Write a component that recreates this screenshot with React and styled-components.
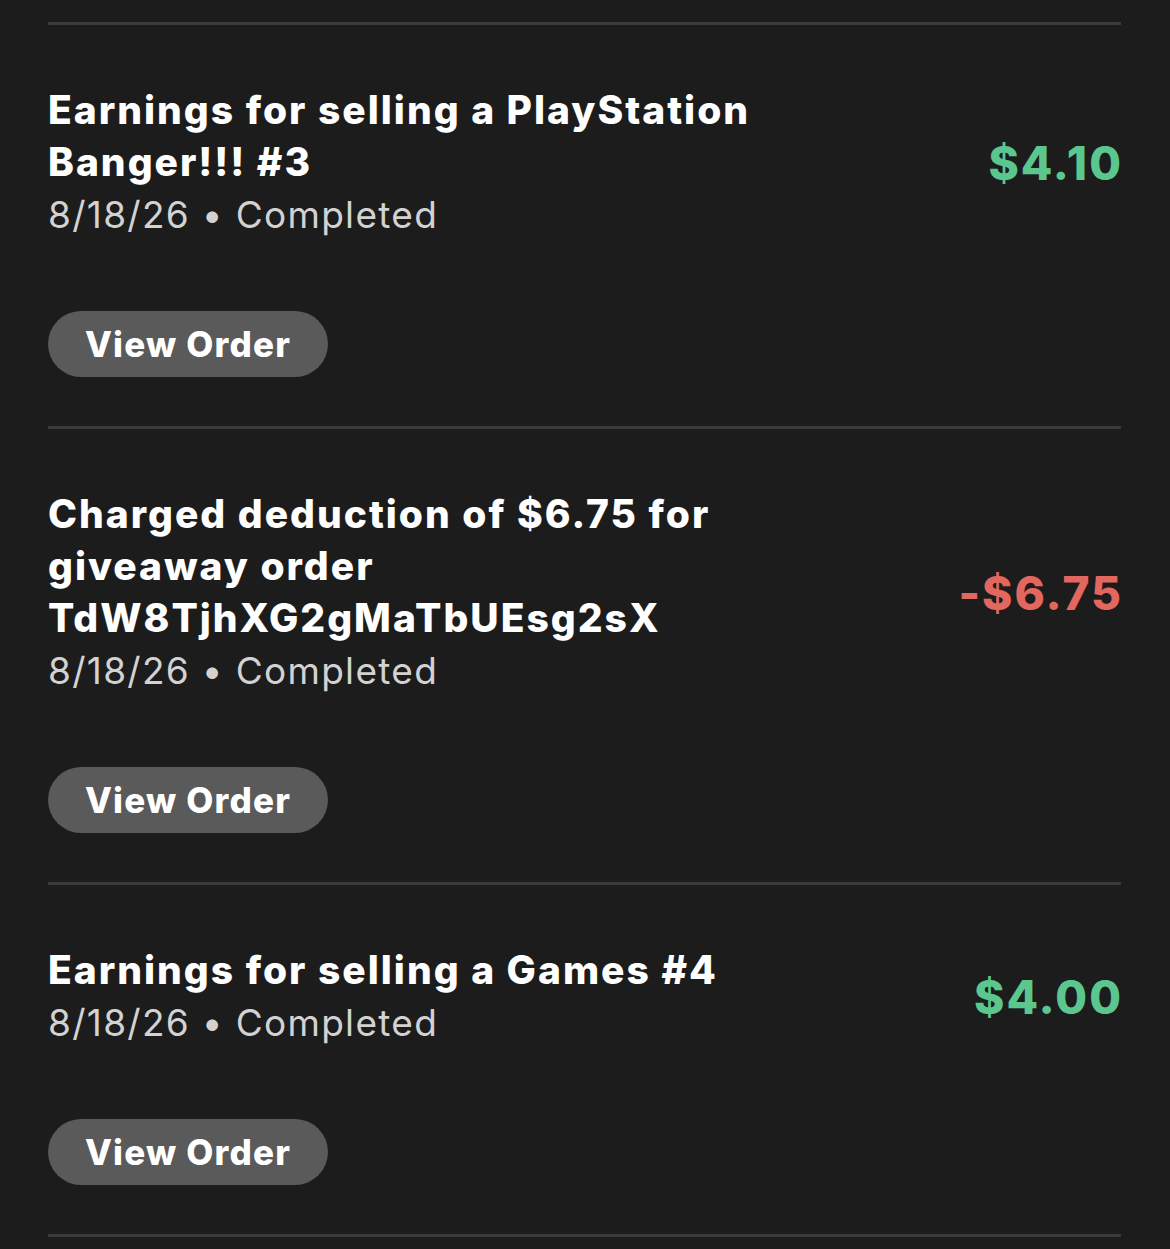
import React from 'react';
import styled, { createGlobalStyle } from 'styled-components';

const GlobalStyle = createGlobalStyle`
    html, body {
        margin: 0;
        padding: 0;
        background: #1c1c1c;
    }
    body {
        font-family: Inter, "Noto Sans", "Liberation Sans", sans-serif;
        -webkit-font-smoothing: antialiased;
    }
`;

const transactions = [
    {
        id: 1,
        title: 'Earnings for selling a PlayStation Banger!!! #3',
        date: '8/18/26',
        status: 'Completed',
        amount: '$4.10',
        negative: false,
    },
    {
        id: 2,
        title: 'Charged deduction of $6.75 for giveaway order TdW8TjhXG2gMaTbUEsg2sX',
        date: '8/18/26',
        status: 'Completed',
        amount: '-$6.75',
        negative: true,
    },
    {
        id: 3,
        title: 'Earnings for selling a Games #4',
        date: '8/18/26',
        status: 'Completed',
        amount: '$4.00',
        negative: false,
    },
];

const App = () => {
    return (
        <>
            <GlobalStyle />
            <Page>
                <Divider />
                {transactions.map((t) => (
                    <React.Fragment key={t.id}>
                        <Item>
                            <Row>
                                <Info>
                                    <Title>{t.title}</Title>
                                    <Meta>{t.date} • {t.status}</Meta>
                                </Info>
                                <Amount negative={t.negative}>{t.amount}</Amount>
                            </Row>
                            <ViewButton>View Order</ViewButton>
                        </Item>
                        <Divider />
                    </React.Fragment>
                ))}
            </Page>
        </>
    );
};

const Page = styled.div`
    padding: 22px 49px 0 48px;
    min-height: 1249px;
    box-sizing: border-box;
    background: #1c1c1c;
`;

const Divider = styled.div`
    height: 3px;
    background: #3a3a3a;
`;

const Item = styled.div`
    padding: 59px 0 49px;
    display: flex;
    flex-direction: column;
    align-items: flex-start;
`;

const Row = styled.div`
    width: 100%;
    display: flex;
    align-items: center;
    justify-content: space-between;
    gap: 40px;
`;

const Info = styled.div`
    max-width: 790px;
    display: flex;
    flex-direction: column;
`;

const Title = styled.div`
    color: #ffffff;
    font-size: 39px;
    font-weight: 800;
    line-height: 52px;
    letter-spacing: 2px;
`;

const Meta = styled.div`
    color: #d2d2d2;
    font-size: 37px;
    font-weight: 400;
    line-height: 53px;
    letter-spacing: 1.3px;
`;

const Amount = styled.div`
    color: ${({ negative }) => (negative ? '#e2675e' : '#5cc68f')};
    font-size: 46px;
    font-weight: 800;
    line-height: 56px;
    letter-spacing: 2px;
    white-space: nowrap;
    margin-right: -2px;
`;

const ViewButton = styled.button`
    margin-top: 70px;
    width: 280px;
    height: 66px;
    border: none;
    border-radius: 33px;
    background: #5a5a5a;
    color: #ffffff;
    font-family: Inter, "Noto Sans", "Liberation Sans", sans-serif;
    font-size: 35px;
    font-weight: 800;
    letter-spacing: 1.2px;
    padding: 0;
    cursor: pointer;
`;

export default App;
